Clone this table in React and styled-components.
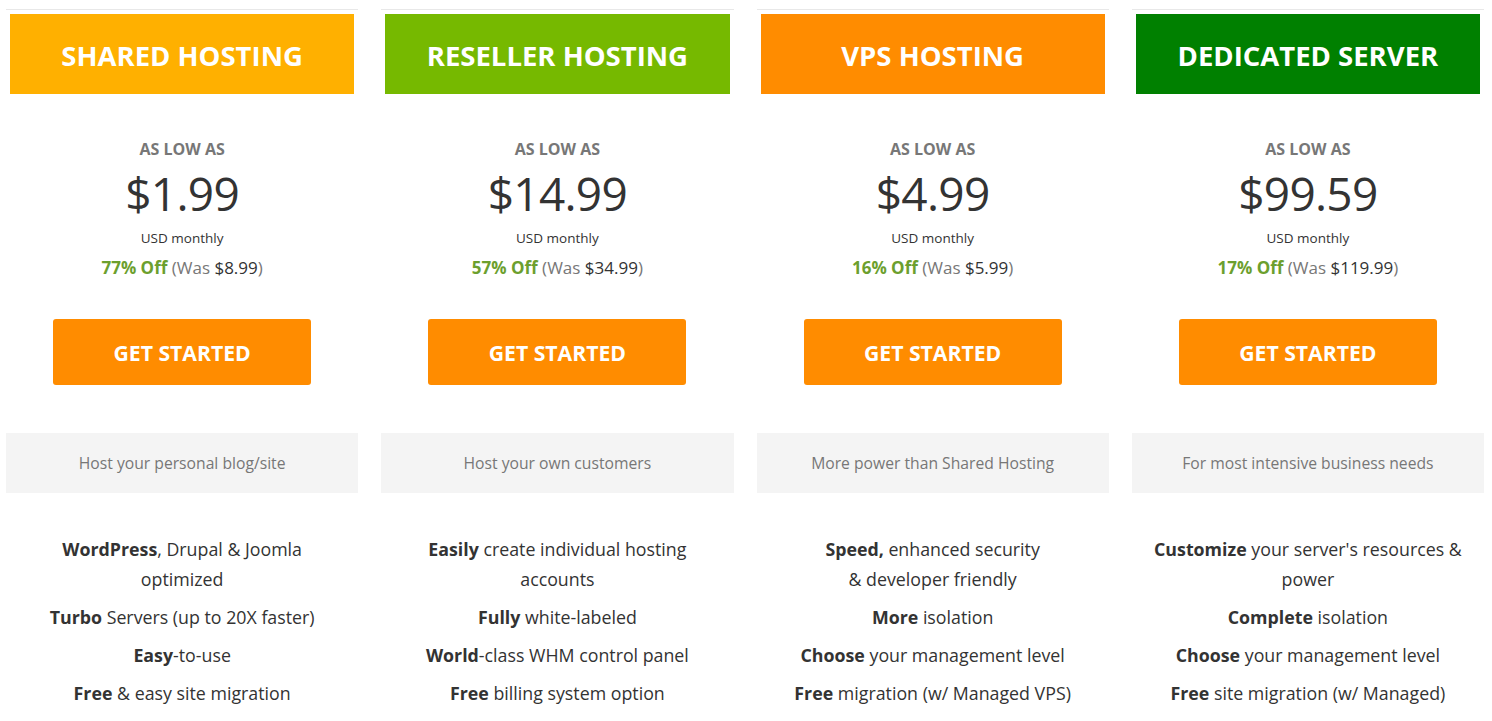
import React from "react";
import styled, { createGlobalStyle } from "styled-components";

const GlobalStyle = createGlobalStyle`
  * {
    box-sizing: border-box;
  }
  body {
    margin: 0;
    background: #fff;
    font-family: "Open Sans", "Liberation Sans", sans-serif;
    color: #333;
  }
`;

const plans = [
  {
    id: "shared",
    title: "SHARED HOSTING",
    color: "#ffb000",
    price: "$1.99",
    off: "77% Off",
    was: "$8.99",
    tagline: "Host your personal blog/site",
    features: [
      [["WordPress", true], [", Drupal & Joomla optimized"]],
      [["Turbo", true], [" Servers (up to 20X faster)"]],
      [["Easy", true], ["-to-use"]],
      [["Free", true], [" & easy site migration"]],
    ],
  },
  {
    id: "reseller",
    title: "RESELLER HOSTING",
    color: "#76b900",
    price: "$14.99",
    off: "57% Off",
    was: "$34.99",
    tagline: "Host your own customers",
    features: [
      [["Easily", true], [" create individual hosting accounts"]],
      [["Fully", true], [" white-labeled"]],
      [["World", true], ["-class WHM control panel"]],
      [["Free", true], [" billing system option"]],
    ],
  },
  {
    id: "vps",
    title: "VPS HOSTING",
    color: "#ff8c00",
    price: "$4.99",
    off: "16% Off",
    was: "$5.99",
    tagline: "More power than Shared Hosting",
    features: [
      [["Speed,", true], [" enhanced security"], ["br"], ["& developer friendly"]],
      [["More", true], [" isolation"]],
      [["Choose", true], [" your management level"]],
      [["Free", true], [" migration (w/ Managed VPS)"]],
    ],
  },
  {
    id: "dedicated",
    title: "DEDICATED SERVER",
    color: "#008000",
    price: "$99.59",
    off: "17% Off",
    was: "$119.99",
    tagline: "For most intensive business needs",
    features: [
      [["Customize", true], [" your server's resources & power"]],
      [["Complete", true], [" isolation"]],
      [["Choose", true], [" your management level"]],
      [["Free", true], [" site migration (w/ Managed)"]],
    ],
  },
];

const PlanCard = ({ plan: { title, color, price, off, was, tagline, features } }) => (
  <Card>
    <Header bg={color}>{title}</Header>
    <LowLabel>AS LOW AS</LowLabel>
    <Price>{price}</Price>
    <Period>USD monthly</Period>
    <Discount>
      <OffText>{off}</OffText> (Was <WasPrice>{was}</WasPrice>)
    </Discount>
    <StartButton>GET STARTED</StartButton>
    <Tagline>{tagline}</Tagline>
    <FeatureList>
      {features.map((parts, i) => (
        <Feature key={i}>
          {parts.map(([text, bold], j) =>
            text === "br" ? <br key={j} /> : bold ? <b key={j}>{text}</b> : <span key={j}>{text}</span>
          )}
        </Feature>
      ))}
    </FeatureList>
  </Card>
);

const App = () => (
  <>
    <GlobalStyle />
    <PlanGrid>
      {plans.map((plan) => (
        <PlanCard key={plan.id} plan={plan} />
      ))}
    </PlanGrid>
  </>
);

const PlanGrid = styled.div`
  display: grid;
  grid-template-columns: repeat(4, 1fr);
  column-gap: 23px;
  padding: 9px 8px 0 6px;
`;

const Card = styled.div`
  display: flex;
  flex-direction: column;
  align-items: center;
  border-top: 1px solid #e8e8e8;
  padding-top: 4px;
  text-align: center;
`;

const Header = styled.div`
  align-self: stretch;
  margin: 0 4px;
  height: 80px;
  padding-top: 2px;
  display: flex;
  align-items: center;
  justify-content: center;
  background: ${({ bg }) => bg};
  color: #fff;
  font-size: 27.5px;
  font-weight: 700;
`;

const LowLabel = styled.div`
  margin-top: 45px;
  line-height: 20px;
  font-size: 16px;
  font-weight: 700;
  color: #777;
`;

const Price = styled.div`
  margin-top: 6px;
  line-height: 56px;
  font-size: 46px;
  font-weight: 400;
  color: #333;
  letter-spacing: -0.7px;
`;

const Period = styled.div`
  margin-top: 7px;
  line-height: 20px;
  font-size: 13.5px;
  color: #333;
`;

const Discount = styled.div`
  margin-top: 9px;
  line-height: 22px;
  font-size: 17px;
  color: #777;
`;

const OffText = styled.b`
  color: #6c9f2e;
`;

const WasPrice = styled.span`
  color: #333;
`;

const StartButton = styled.button`
  margin-top: 40px;
  width: 258px;
  height: 66px;
  border: none;
  border-radius: 3px;
  background: #ff8c00;
  color: #fff;
  font-family: inherit;
  font-size: 21.2px;
  font-weight: 700;
  cursor: pointer;
`;

const Tagline = styled.div`
  align-self: stretch;
  margin-top: 48px;
  height: 60px;
  display: flex;
  align-items: center;
  justify-content: center;
  background: #f4f4f4;
  font-size: 15.7px;
  color: #777;
`;

const FeatureList = styled.div`
  margin-top: 41px;
  padding: 0 18px;
  display: flex;
  flex-direction: column;
  gap: 8px;
`;

const Feature = styled.p`
  margin: 0;
  font-size: 17.8px;
  line-height: 30px;
  color: #333;
  b {
    font-weight: 700;
  }
`;

export default App;
